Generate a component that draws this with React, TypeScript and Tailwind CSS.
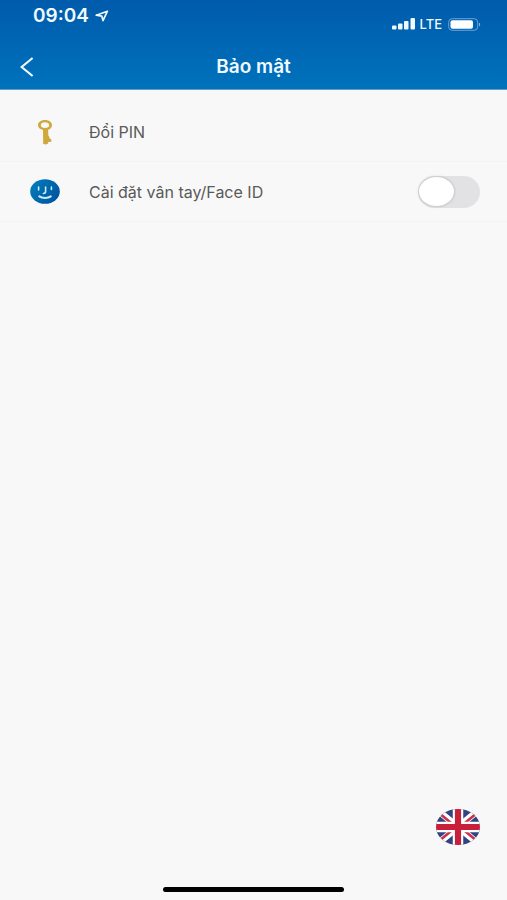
import { useState, type ReactNode } from 'react'

export default function App() {
  const [faceId, setFaceId] = useState(false)

  return (
    <div className="flex min-h-screen flex-col bg-[#f8f8f8] font-['Inter','Liberation_Sans',sans-serif] text-[#5a5a5a]">
      <header className="border-b border-[#5a9fcb] bg-linear-to-b from-[#005bab] to-[#0072bc] text-[#f0faff]">
        <StatusBar />
        <div className="grid grid-cols-[56px_1fr_56px] items-center pb-1">
          <button type="button" aria-label="Quay lại" className="flex h-9 items-center pl-5">
            <svg viewBox="0 0 14 20" className="h-5 w-3.5" fill="none" stroke="currentColor" strokeWidth="2.2">
              <path d="M12.6 1 1.6 10l11 9" />
            </svg>
          </button>
          <h1 className="text-center text-[19px] leading-6 font-semibold">Bảo mật</h1>
        </div>
      </header>

      <main className="flex flex-1 flex-col pt-3">
        <Row icon={<KeyIcon />}>
          <button type="button" className="flex-1 text-left">Đổi PIN</button>
        </Row>
        <Row icon={<FaceIcon />}>
          <label htmlFor="face-id" className="flex-1">Cài đặt vân tay/Face ID</label>
          <input
            id="face-id"
            type="checkbox"
            role="switch"
            checked={faceId}
            onChange={(event) => setFaceId(event.target.checked)}
            className="flex h-8 w-[62px] shrink-0 cursor-pointer appearance-none items-center rounded-full bg-[#e2e2e4] px-px before:h-[29px] before:w-[35px] before:rounded-[50%] before:bg-white before:shadow-[0_0_3px_rgba(0,0,0,0.25)] checked:justify-end checked:bg-[#0072bc]"
          />
        </Row>

        <button type="button" aria-label="English" className="mt-auto mr-[27px] mb-[42px] self-end">
          <FlagIcon />
        </button>
      </main>

      <div className="mx-auto mb-2 h-[5px] w-[181px] rounded-full bg-black" />
    </div>
  )
}

function Row({ icon, children }: { icon: ReactNode; children: ReactNode }) {
  return (
    <div className="flex h-[60px] items-center border-b border-[#f3f3f3] pr-[27px] pl-[30px] text-base">
      <div className="mr-[29px] flex w-[30px] shrink-0 justify-center">{icon}</div>
      {children}
    </div>
  )
}

function StatusBar() {
  return (
    <div className="flex h-[49px] items-start justify-between pt-1 pr-[26px] pl-[33px]">
      <div className="flex items-center gap-1.5 text-[19px] leading-6 font-semibold">
        09:04
        <svg viewBox="0 0 14 12" className="h-3 w-3.5" fill="none" stroke="currentColor" strokeWidth="1.7" strokeLinejoin="round">
          <path d="M12.4 1.200 1.200 5.200l5.600.9 1.200 4.500z" />
        </svg>
      </div>
      <div className="flex items-center gap-1 pt-2 text-[13px] leading-6 font-medium">
        <svg viewBox="0 0 24 12" className="h-3 w-6" fill="currentColor">
          <rect x="0" y="7.5" width="4.500" height="4" rx="1" />
          <rect x="6" y="5.5" width="4.500" height="6" rx="1" />
          <rect x="12" y="3" width="4.500" height="8.500" rx="1" />
          <rect x="18.500" y="0" width="4.500" height="11.500" rx="1" />
        </svg>
        LTE
        <svg viewBox="0 0 33 13" className="ml-0.5 h-[13px] w-[33px]" fill="none">
          <rect x="0.7" y="0.7" width="29" height="11.600" rx="3.500" stroke="#7fb4e0" strokeOpacity="0.8" />
          <rect x="2.500" y="2.300" width="22.500" height="8.400" rx="2" fill="white" />
          <path d="M31 4.500c1.600.5 1.600 3.500 0 4z" fill="#7fb4e0" />
        </svg>
      </div>
    </div>
  )
}

function KeyIcon() {
  return (
    <svg viewBox="0 0 16 26" className="h-[26px] w-4" fill="#d0a83e">
      <path fillRule="evenodd" d="M8 1c4 0 7 2.200 7 5.200 0 2.200-1.500 3.900-3.900 4.600l.3 6 .9 1 .1 1.500 1.800.9.200 2.500-3.200.3-.1 1.600-2 1-2.900-.7L6 10.900C2.900 10.400 1 8.600 1 6.200 1 3.200 4 1 8 1Zm0 2.300c-2.500 0-4.200 1.200-4.200 2.900S5.500 9 8 9s4.200-1.100 4.200-2.800S10.500 3.300 8 3.300Z" />
    </svg>
  )
}

function FaceIcon() {
  return (
    <svg viewBox="0 0 30 25" className="h-[25px] w-[30px]" fill="none" stroke="#c8ecfb" strokeWidth="1.600" strokeLinecap="round">
      <defs>
        <linearGradient id="face" x1="0" y1="0" x2="1" y2="0.6">
          <stop offset="0" stopColor="#0080bf" />
          <stop offset="1" stopColor="#0056a0" />
        </linearGradient>
      </defs>
      <ellipse cx="15" cy="12.500" rx="14.800" ry="12.300" fill="url(#face)" stroke="none" />
      <path d="M8.600 8v3M21.400 8v2.400M15.600 8v4.600c0 1.300-.6 1.900-2.200 1.900" />
      <path d="M9.200 17.400c3 2.100 8.800 2.100 11.600 0" strokeWidth="2" />
    </svg>
  )
}

function FlagIcon() {
  return (
    <svg viewBox="0 0 44 36" className="h-9 w-11">
      <clipPath id="flag">
        <ellipse cx="22" cy="18" rx="22" ry="18" />
      </clipPath>
      <g clipPath="url(#flag)">
        <path d="M0 0h44v36H0z" fill="#2f4480" />
        <path d="M0 0l44 36M44 0L0 36" stroke="#ffffff" strokeWidth="6.500" />
        <path d="M0 1.500 20 18M44 1.500 24 18M0 34.500 20 18M44 34.500 24 18" stroke="#c8324a" strokeWidth="2.600" />
        <path d="M22 0v36M0 18h44" stroke="#ffffff" strokeWidth="10.500" />
        <path d="M22 0v36M0 18h44" stroke="#c8203a" strokeWidth="6.200" />
      </g>
    </svg>
  )
}
